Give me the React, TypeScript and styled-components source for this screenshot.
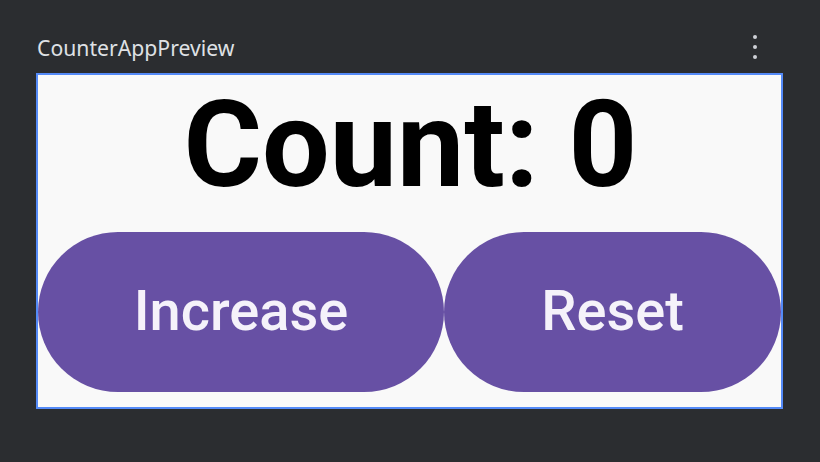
import React, { useState } from 'react'
import styled, { createGlobalStyle } from 'styled-components'

const GlobalStyle = createGlobalStyle`
  html, body {
    margin: 0;
    padding: 0;
    background: #2b2d30;
  }
  body {
    width: 820px;
    height: 462px;
    overflow: hidden;
  }
`

const Page = styled.div`
  width: 820px;
  height: 462px;
  box-sizing: border-box;
  padding: 30px 37px 0 36px;
  display: flex;
  flex-direction: column;
`

const Header = styled.div`
  display: flex;
  align-items: center;
  justify-content: space-between;
  height: 34px;
  margin-bottom: 9px;
  padding-left: 1px;
`

const Title = styled.div`
  font-family: 'Noto Sans', 'Open Sans', sans-serif;
  font-size: 21.2px;
  line-height: 28px;
  margin-top: 1px;
  color: #dfe1e5;
`

const MenuButton = styled.div`
  display: flex;
  flex-direction: column;
  align-items: center;
  gap: 6px;
  width: 20px;
  margin-right: 18px;
`

const Dot = styled.span`
  width: 4px;
  height: 4px;
  border-radius: 50%;
  background: #ced0d6;
`

const Frame = styled.div`
  width: 747px;
  height: 336px;
  box-sizing: border-box;
  border: 2px solid #548af7;
  background: #f9f9f9;
  display: flex;
  flex-direction: column;
  align-items: center;
  overflow: hidden;
`

const CountText = styled.div`
  font-family: Roboto, sans-serif;
  font-weight: 700;
  font-size: 120px;
  line-height: 141px;
  color: #000000;
  margin-left: 2px;
`

const ButtonRow = styled.div`
  display: flex;
  width: 100%;
  margin-top: 16px;
`

const PillButton = styled.button<{ $wide?: boolean }>`
  height: 160px;
  border: none;
  border-radius: 80px;
  background: #6750a4;
  color: #f5f2fa;
  font-family: Roboto, sans-serif;
  font-weight: 500;
  font-size: 56px;
  padding: 0 0 2px;
  cursor: pointer;
  ${p => (p.$wide ? 'width: 406px; flex: none;' : 'flex: 1;')}
`

const App: React.FC = () => {
  const [count, setCount] = useState(0)

  return (
    <>
      <GlobalStyle />
      <Page>
        <Header>
          <Title>CounterAppPreview</Title>
          <MenuButton>
            <Dot />
            <Dot />
            <Dot />
          </MenuButton>
        </Header>
        <Frame>
          <CountText>Count: {count}</CountText>
          <ButtonRow>
            <PillButton $wide onClick={() => setCount(count + 1)}>
              Increase
            </PillButton>
            <PillButton onClick={() => setCount(0)}>Reset</PillButton>
          </ButtonRow>
        </Frame>
      </Page>
    </>
  )
}

export default App
